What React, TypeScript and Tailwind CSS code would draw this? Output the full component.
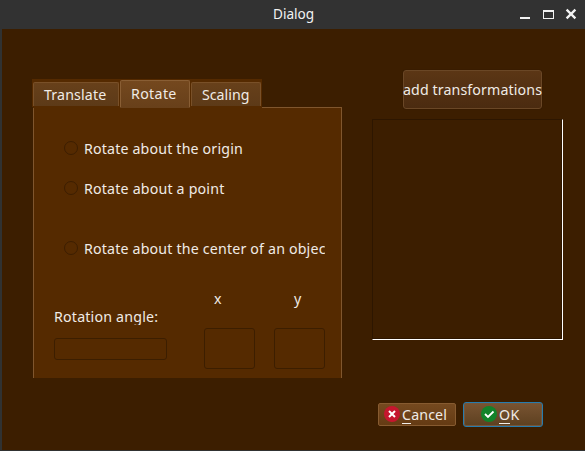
import React from "react";

const OPTIONS = [
  { label: "Rotate about the origin", spacing: "tracking-[0.17px]", gap: "" },
  { label: "Rotate about a point", spacing: "tracking-[0.19px]", gap: "mt-[20px]" },
  { label: "Rotate about the center of an object", spacing: "tracking-[0.18px]", gap: "mt-[40px]" },
];

function TitleBar() {
  return (
    <header className="flex h-[29px] shrink-0 bg-[#323232] text-[#f2f2f2]">
      <h1 className="ml-[273px] w-[247px] text-[13.6px] leading-[28px]">Dialog</h1>
      <svg width="60" height="29" fill="none" stroke="#f2f2f2" shapeRendering="crispEdges">
        <rect x="0" y="17" width="10" height="2" fill="#f2f2f2" stroke="none" />
        <path d="M23 10h11v9H23z M24 12h9v6h-9z" fill="#f2f2f2" fillRule="evenodd" stroke="none" />
        <path d="M46.6 9.6l8.8 8.8M55.4 9.6l-8.8 8.8" strokeWidth="2.3" shapeRendering="auto" />
      </svg>
    </header>
  );
}

function Tabs() {
  const side = "h-[24px] rounded-t-[2px] border border-b-0 border-[#795028] bg-linear-to-b from-[#67401a] to-[#5d3a18] leading-[24px]";
  return (
    <div className="flex h-[28px] w-[230px] items-end gap-px bg-[#552a00] pl-px">
      <div className={side + " mb-px w-[86px] pl-[10px] tracking-[0.14px]"}>Translate</div>
      <div className="h-[27px] w-[70px] rounded-t-[2px] border border-b-0 border-[#895e34] bg-linear-to-b from-[#74481e] to-[#68401a] pl-[10px] leading-[25px] tracking-[0.35px]">
        Rotate
      </div>
      <div className={side + " mb-px w-[70px] pl-[10px]"}>Scaling</div>
    </div>
  );
}

function Coordinate({ name, inset }: { name: string; inset: string }) {
  return (
    <div className="w-[51px]">
      <div className={"h-[39px] leading-[20px] " + inset}>{name}</div>
      <div className="h-[41px] rounded-[3px] border border-[#3c1e00]" />
    </div>
  );
}

function RotatePanel() {
  return (
    <section className="ml-px h-[271px] w-[309px] bg-[#552a00]">
      <div className="flex h-px">
        <div className="ml-[87px] w-[70px] bg-[#68401a]" />
        <div className="ml-[72px] flex-1 bg-[#80562d]" />
      </div>
      <div className="h-[270px] border-x border-[#80562d] pt-[30px]">
        {OPTIONS.map((o) => (
          <div key={o.label} className={"ml-[30px] flex h-[20px] w-[261px] items-center overflow-hidden " + o.gap}>
            <span className="size-[14px] shrink-0 rounded-full border border-[#3c1e00]" />
            <span className={"ml-[6px] whitespace-nowrap pt-px leading-[21px] " + o.spacing}>{o.label}</span>
          </div>
        ))}
        <div className="ml-[20px] mt-[31px] flex">
          <div className="w-[113px] pt-[17px]">
            <div className="h-[19px] overflow-hidden leading-[22px] tracking-[0.2px]">Rotation angle:</div>
            <div className="mt-[13px] h-[22px] rounded-[3px] border border-[#3c1e00]" />
          </div>
          <div className="ml-[37px] flex gap-[19px]">
            <Coordinate name="x" inset="pl-[10px]" />
            <Coordinate name="y" inset="pl-[20px]" />
          </div>
        </div>
      </div>
    </section>
  );
}

export default function App() {
  return (
    <div className="flex h-[451px] w-[585px] flex-col overflow-hidden bg-[#3c1e00] font-['Noto_Sans',sans-serif] text-[14.2px] text-[#f0ebe6]">
      <TitleBar />
      <main className="min-h-0 flex-1 border-b border-l-2 border-[#303232] pl-[30px]">
        <div className="flex h-[373px]">
          <div className="w-[310px] pt-[50px]">
            <Tabs />
            <RotatePanel />
          </div>
          <div className="ml-[30px] w-[191px] pt-[41px]">
            <button className="ml-[31px] flex h-[39px] w-[139px] items-center justify-center whitespace-nowrap rounded-[3px] border border-[#6a4726] bg-linear-to-b from-[#5b3615] to-[#4b2b10] tracking-[0.12px] shadow-[0_0_1px_#251200]">
              add transformations
            </button>
            <div className="mt-[10px] h-[221px] border border-b-white border-l-[#2d1600] border-r-white border-t-[#2d1600] shadow-[inset_-1px_-1px_#2d1600]" />
          </div>
        </div>
        <div className="ml-[346px] flex items-center gap-[7px]">
          <button className="flex h-[23px] w-[78px] items-center rounded-[2px] border border-[#875b30] bg-linear-to-b from-[#75491f] to-[#653b13] pl-[5px]">
            <svg width="16" height="16" viewBox="0 0 16 16" className="mb-px">
              <circle cx="8" cy="8" r="8" fill="#c5162e" />
              <path d="M5 5l6 6M11 5l-6 6" stroke="#fff" strokeWidth="2" />
            </svg>
            <span className="ml-[2px] leading-[22px] tracking-[0.15px]">
              <span className="inline-block h-[20px] border-b border-[#f2eeea] leading-[22px]">C</span>ancel
            </span>
          </button>
          <button className="flex h-[25px] w-[80px] items-center rounded-[3px] border border-[#267cae] bg-linear-to-b from-[#795432] to-[#5d4020] pl-[17px] shadow-[inset_0_0_0_1px_#75563a]">
            <svg width="16" height="16" viewBox="0 0 16 16" className="mb-px">
              <circle cx="8" cy="8" r="8" fill="#12832a" />
              <path d="M4 8l3 3 5.5-5.5" fill="none" stroke="#fff" strokeWidth="1.8" />
            </svg>
            <span className="ml-[2px] leading-[22px] tracking-[0.3px]">
              <span className="inline-block h-[20px] border-b border-[#f2eeea] leading-[22px]">O</span>K
            </span>
          </button>
        </div>
      </main>
    </div>
  );
}
